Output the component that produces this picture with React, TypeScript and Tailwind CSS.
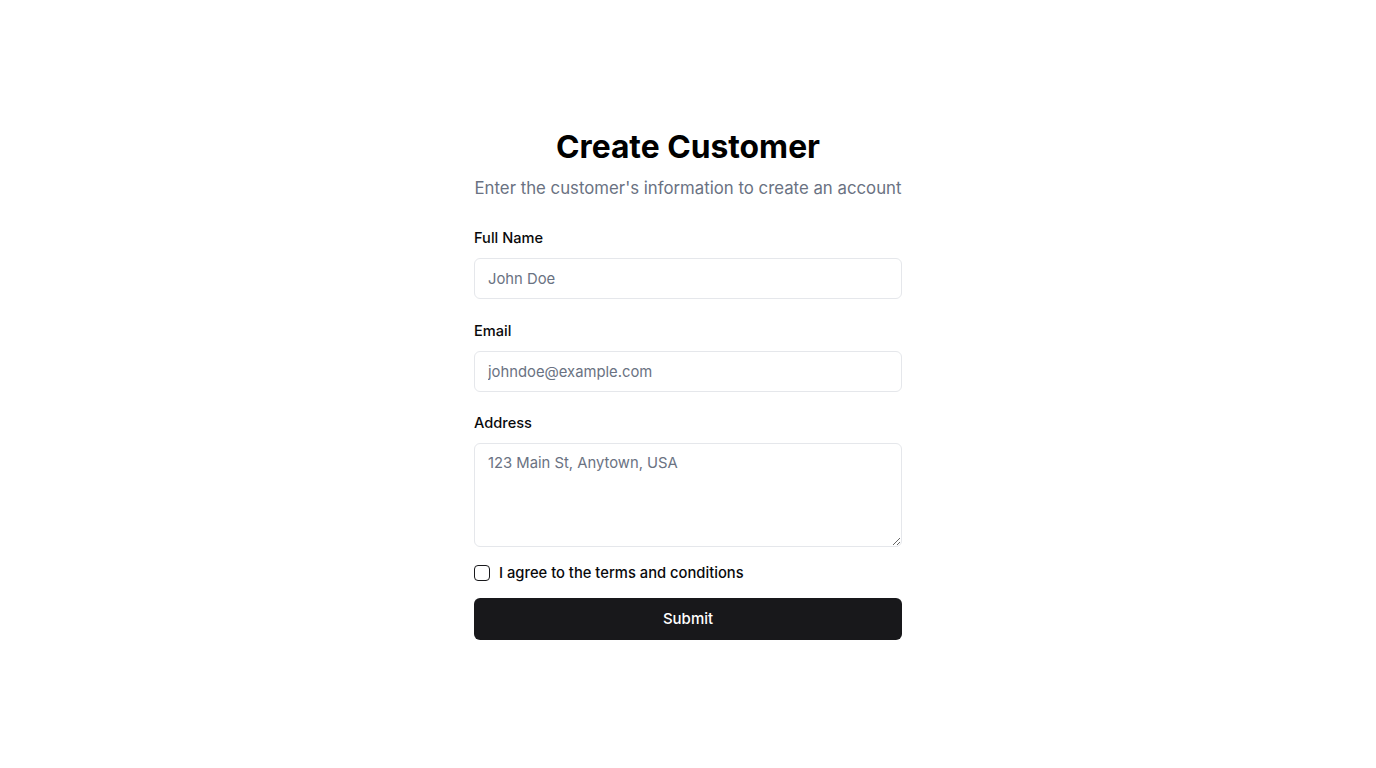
export default function App() {
  return (
    <div className="min-h-screen bg-white flex justify-center font-['Inter',sans-serif] text-[#09090b]">
      <div className="w-[428px] pt-[129px]">
        <h1 className="text-[31.8px] leading-9 font-bold text-center text-black">Create Customer</h1>
        <p className="mt-[11px] text-[16.8px] leading-6 text-gray-500 text-center whitespace-nowrap">
          Enter the customer&apos;s information to create an account
        </p>

        <form className="mt-[28px] flex flex-col" onSubmit={(e) => e.preventDefault()}>
          <label className="text-[14.6px] leading-5 font-medium">Full Name</label>
          <input
            type="text"
            placeholder="John Doe"
            className="mt-[10px] h-[41px] w-full rounded-md border border-gray-200 px-[13px] text-[14.8px] placeholder:text-gray-500 outline-none"
          />

          <label className="mt-[22px] text-[14.6px] leading-5 font-medium">Email</label>
          <input
            type="email"
            placeholder="johndoe@example.com"
            className="mt-[10px] h-[41px] w-full rounded-md border border-gray-200 px-[13px] text-[14.8px] placeholder:text-gray-500 outline-none"
          />

          <label className="mt-[21px] text-[14.6px] leading-5 font-medium">Address</label>
          <textarea
            placeholder="123 Main St, Anytown, USA"
            className="mt-[10px] h-[104px] w-full rounded-md border border-gray-200 px-[13px] py-[7px] text-[14.8px] leading-6 placeholder:text-gray-500 outline-none"
          />

          <div className="mt-[16px] flex items-center gap-[9px]">
            <input
              type="checkbox"
              className="h-4 w-4 appearance-none rounded-[4px] border border-[#18181b] bg-white"
            />
            <span className="text-[14.75px] leading-5 font-medium">I agree to the terms and conditions</span>
          </div>

          <button
            type="submit"
            className="mt-[15px] h-[42px] w-full rounded-md bg-[#18181b] text-[15px] font-medium text-white"
          >
            Submit
          </button>
        </form>
      </div>
    </div>
  );
}
